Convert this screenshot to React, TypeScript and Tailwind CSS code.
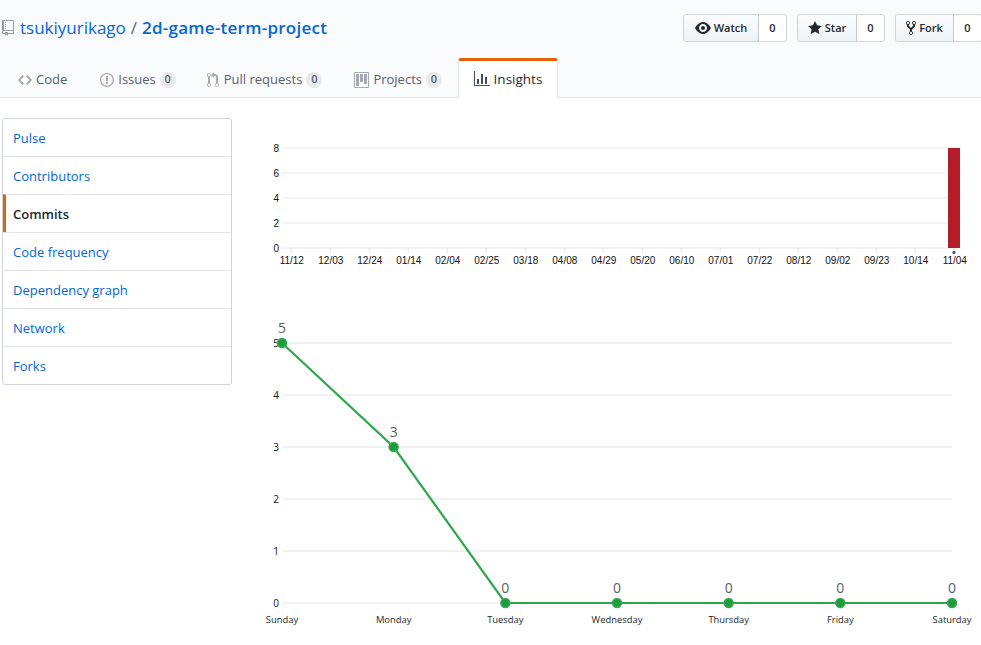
const ui = "font-['Open_Sans','Noto_Sans',sans-serif]";

function Octicon({ d, w, size = 16, className }: { d: string; w: number; size?: number; className?: string }) {
  return (
    <svg viewBox={`0 0 ${w} 16`} width={(w * size) / 16} height={size} fill="currentColor" className={className}>
      <path fillRule="evenodd" d={d} />
    </svg>
  );
}

const icons = {
  repo: 'M4 9H3V8h1v1zm0-3H3v1h1V6zm0-2H3v1h1V4zm0-2H3v1h1V2zm8-1v12c0 .55-.45 1-1 1H6v2l-1.5-1.5L3 16v-2H1c-.55 0-1-.45-1-1V1c0-.55.45-1 1-1h10c.55 0 1 .45 1 1zm-1 10H1v2h2v-1h3v1h5v-2zm0-10H2v9h9V1z',
  code: 'M9.5 3L8 4.5 11.5 8 8 11.5 9.5 13 14 8 9.5 3zm-5 0L0 8l4.5 5L6 11.5 2.5 8 6 4.5 4.5 3z',
  issue: 'M7 2.3c3.14 0 5.7 2.56 5.7 5.7s-2.56 5.7-5.7 5.7A5.71 5.71 0 0 1 1.3 8c0-3.14 2.56-5.7 5.7-5.7zM7 1C3.14 1 0 4.14 0 8s3.14 7 7 7 7-3.14 7-7-3.14-7-7-7zm1 3H6v5h2V4zm0 6H6v2h2v-2z',
  pull: 'M11 11.28V5c-.03-.78-.34-1.47-.94-2.06C9.46 2.35 8.78 2.03 8 2H7V0L4 3l3 3V4h1c.27.02.48.11.69.31.21.2.3.42.31.69v6.28A1.993 1.993 0 0 0 10 15a1.993 1.993 0 0 0 1-3.72zm-1 2.92c-.66 0-1.2-.55-1.2-1.2 0-.65.55-1.2 1.2-1.2.65 0 1.2.55 1.2 1.2 0 .65-.55 1.2-1.2 1.2zM4 3c0-1.11-.89-2-2-2a1.993 1.993 0 0 0-1 3.72v6.56A1.993 1.993 0 0 0 2 15a1.993 1.993 0 0 0 1-3.72V4.72c.59-.34 1-.98 1-1.72zm-.8 10c0 .66-.55 1.2-1.2 1.2-.65 0-1.2-.55-1.2-1.2 0-.65.55-1.2 1.2-1.2.65 0 1.2.55 1.2 1.2zM2 4.2C1.34 4.2.8 3.65.8 3c0-.65.55-1.2 1.2-1.2.65 0 1.2.55 1.2 1.2 0 .65-.55 1.2-1.2 1.2z',
  project: 'M10 12h3V2h-3v10zm-4-2h3V2H6v8zm-4 4h3V2H2v12zm-1 1h13V1H1v14zM14 0H1a1 1 0 0 0-1 1v14a1 1 0 0 0 1 1h13a1 1 0 0 0 1-1V1a1 1 0 0 0-1-1z',
  graph: 'M16 14v1H0V0h1v14h15zM5 13H3V8h2v5zm4 0H7V3h2v10zm4 0h-2V6h2v7z',
  eye: 'M8.06 2C3 2 0 8 0 8s3 6 8.06 6C13 14 16 8 16 8s-3-6-7.94-6zM8 12c-2.2 0-4-1.78-4-4 0-2.2 1.8-4 4-4 2.22 0 4 1.8 4 4 0 2.22-1.78 4-4 4zm2-4c0 1.11-.89 2-2 2-1.11 0-2-.89-2-2 0-1.11.89-2 2-2 1.11 0 2 .89 2 2z',
  star: 'M14 6l-4.9-.64L7 1 4.9 5.36 0 6l3.6 3.26L2.67 14 7 11.67 11.33 14l-.93-4.74L14 6z',
  fork: 'M8 1a1.993 1.993 0 0 0-1 3.72V6L5 8 3 6V4.72A1.993 1.993 0 0 0 2 1a1.993 1.993 0 0 0-1 3.72V6.5l3 3v1.78A1.993 1.993 0 0 0 5 15a1.993 1.993 0 0 0 1-3.72V9.5l3-3V4.72A1.993 1.993 0 0 0 8 1zM2 4.2C1.34 4.2.8 3.65.8 3c0-.65.55-1.2 1.2-1.2.65 0 1.2.55 1.2 1.2 0 .65-.55 1.2-1.2 1.2zm3 10c-.66 0-1.2-.55-1.2-1.2 0-.65.55-1.2 1.2-1.2.65 0 1.2.55 1.2 1.2 0 .65-.55 1.2-1.2 1.2zm3-10c-.66 0-1.2-.55-1.2-1.2 0-.65.55-1.2 1.2-1.2.65 0 1.2.55 1.2 1.2 0 .65-.55 1.2-1.2 1.2z',
};

function Action({ icon, w, label, count, labelWidth }: { icon: string; w: number; label: string; count: number; labelWidth: string }) {
  return (
    <div className="flex h-[28px] shrink-0 rounded-[3px] border border-[#d1d5da] text-[11px] font-semibold text-[#24292e]">
      <div className={`flex items-center justify-center gap-[3px] rounded-l-[3px] border-r border-[#c4c8cc] bg-gradient-to-b from-[#fafbfc] to-[#eff3f6] ${labelWidth}`}>
        <Octicon d={icon} w={w} />
        <span>{label}</span>
      </div>
      <div className="flex w-[27px] items-center justify-center rounded-r-[3px] bg-white">{count}</div>
    </div>
  );
}

function Tab({ icon, w, label, count, className, iconGap }: { icon: string; w: number; label: string; count?: number; className: string; iconGap: string }) {
  return (
    <div className={`flex h-[41px] items-center pt-[2px] text-[13px] text-[#586069] ${className}`}>
      <Octicon d={icon} w={w} className={`text-[#a3aab1] ${iconGap}`} />
      <span>{label}</span>
      {count !== undefined && (
        <span className="ml-[4px] flex h-[16px] w-[16px] items-center justify-center rounded-full bg-[#e8eaec] text-[11px] font-semibold text-[#586069]">
          {count}
        </span>
      )}
    </div>
  );
}

const sideLinks = ['Pulse', 'Contributors', 'Commits', 'Code frequency', 'Dependency graph', 'Network', 'Forks'];

function Sidebar() {
  return (
    <div className="ml-[2px] mt-[20px] h-[267px] w-[230px] shrink-0 overflow-hidden rounded-[3px] border border-[#d1d5da] bg-white">
      {sideLinks.map((link, i) => {
        const active = link === 'Commits';
        return (
          <div
            key={link}
            className={`flex items-center pt-[2px] text-[13px] ${i > 0 ? 'h-[38px] border-t border-[#e1e4e8]' : 'h-[37px]'} ${
              active ? 'border-l-[3px] border-l-[#e36209] pl-[7px] font-semibold text-[#24292e]' : 'pl-[10px] text-[#0366d6]'
            }`}
          >
            {link}
          </div>
        );
      })}
    </div>
  );
}

const weeks = ['11/12', '12/03', '12/24', '01/14', '02/04', '02/25', '03/18', '04/08', '04/29', '05/20', '06/10', '07/01', '07/22', '08/12', '09/02', '09/23', '10/14', '11/04'];

function BarChart() {
  return (
    <svg viewBox="250 130 731 140" width={731} height={140} className="block font-['Liberation_Sans',sans-serif]">
      {[8, 6, 4, 2, 0].map((v, i) => {
        const y = 148 + i * 25;
        return (
          <g key={v}>
            <line x1={283} x2={962} y1={y} y2={y} stroke="#e8e8e8" />
            <text x={279} y={y + 3.5} textAnchor="end" fontSize={10} fill="#111">{v}</text>
          </g>
        );
      })}
      {weeks.map((w, i) => {
        const x = 291.3 + i * 39;
        return (
          <g key={w}>
            <line x1={x} x2={x} y1={248} y2={253} stroke="#e8e8e8" />
            <text x={x + 0.5} y={264} textAnchor="middle" fontSize={10} fill="#111">{w}</text>
          </g>
        );
      })}
      <rect x={948} y={148} width={12} height={100} fill="#b31d28" />
      <circle cx={954} cy={252.5} r={1.7} fill="#586069" />
    </svg>
  );
}

const days = [
  { name: 'Sunday', value: 5 },
  { name: 'Monday', value: 3 },
  { name: 'Tuesday', value: 0 },
  { name: 'Wednesday', value: 0 },
  { name: 'Thursday', value: 0 },
  { name: 'Friday', value: 0 },
  { name: 'Saturday', value: 0 },
];

function LineChart() {
  const px = (i: number) => 282 + i * 111.67;
  const py = (v: number) => 603 - v * 52;
  return (
    <svg viewBox="250 310 731 335" width={731} height={335} className="mt-[40px] block font-['Open_Sans','Noto_Sans',sans-serif]">
      {[5, 4, 3, 2, 1, 0].map((v) => (
        <g key={v}>
          <line x1={283} x2={952} y1={py(v)} y2={py(v)} stroke="#eeeeee" strokeWidth={1.5} />
          <text x={276} y={py(v) + 3.5} textAnchor="middle" fontSize={10} fill="#111">{v}</text>
        </g>
      ))}
      <polyline points={days.map((d, i) => `${px(i)},${py(d.value)}`).join(' ')} fill="none" stroke="#2ca84a" strokeWidth={2.2} />
      {days.map((d, i) => (
        <g key={d.name}>
          <circle cx={px(i)} cy={py(d.value)} r={4.5} fill="#1f9a3d" stroke="#3aa856" strokeWidth={1.5} />
          <text x={px(i)} y={py(d.value) - 10} textAnchor="middle" fontSize={14} fill="#586069">{d.value}</text>
          <text x={px(i)} y={623} textAnchor="middle" fontSize={9.4} fill="#24292e">{d.name}</text>
        </g>
      ))}
    </svg>
  );
}

export default function App() {
  return (
    <div className={`h-[645px] w-[981px] overflow-hidden bg-white ${ui}`}>
      <div className="h-[98px] border-b border-[#e1e4e8] bg-[#fafbfc]">
        <div className="flex h-[58px] items-start justify-between">
          <div className="ml-[2px] mt-[20px] flex items-center text-[17px] leading-[16px]">
            <Octicon d={icons.repo} w={12} className="mr-[6px] text-[#959da5]" />
            <span className="text-[#0366d6]">tsukiyurikago</span>
            <span className="mx-[5px] text-[#586069]">/</span>
            <span className="font-semibold tracking-[0.25px] text-[#0366d6]">2d-game-term-project</span>
          </div>
          <div className="mr-[-1px] mt-[14px] flex shrink-0 gap-[10px]">
            <Action icon={icons.eye} w={16} label="Watch" count={0} labelWidth="w-[75px]" />
            <Action icon={icons.star} w={14} label="Star" count={0} labelWidth="w-[59px]" />
            <Action icon={icons.fork} w={10} label="Fork" count={0} labelWidth="w-[58px]" />
          </div>
        </div>
        <div className="flex h-[40px]">
          <Tab icon={icons.code} w={14} label="Code" className="ml-[18px]" iconGap="mr-[4px]" />
          <Tab icon={icons.issue} w={14} label="Issues" count={0} className="ml-[33px]" iconGap="mr-[4px]" />
          <Tab icon={icons.pull} w={12} label="Pull requests" count={0} className="ml-[31px]" iconGap="mr-[5px]" />
          <Tab icon={icons.project} w={15} label="Projects" count={0} className="ml-[32px]" iconGap="mr-[4px]" />
          <div className="ml-[16px] flex h-[40px] w-[100px] items-center justify-center gap-[4px] rounded-t-[3px] border-x border-t-[3px] border-[#e1e4e8] border-t-[#e36209] bg-white pb-[1px] text-[13.5px] text-[#24292e]">
            <Octicon d={icons.graph} w={16} className="text-[#444d56]" />
            <span>Insights</span>
          </div>
        </div>
      </div>
      <div className="flex">
        <Sidebar />
        <div className="ml-[18px] mt-[32px] shrink-0">
          <BarChart />
          <LineChart />
        </div>
      </div>
    </div>
  );
}
